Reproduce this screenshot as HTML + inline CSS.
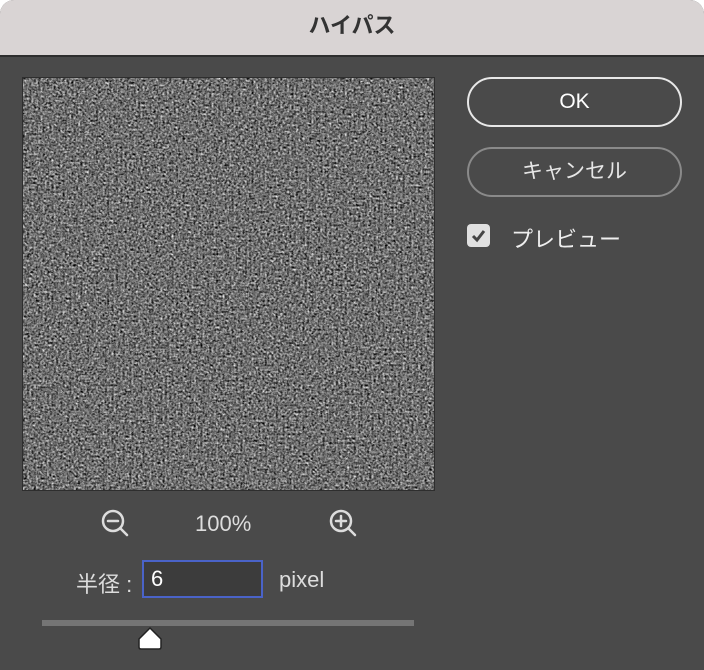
<!DOCTYPE html>
<html><head><meta charset="utf-8"><style>
html,body{margin:0;padding:0;width:704px;height:670px;background:#fff;overflow:hidden}
body{font-family:"Liberation Sans","Noto Sans CJK JP",sans-serif}
.win{position:absolute;left:0;top:0;width:704px;height:670px;border-radius:14px 14px 0 0;background:#4a4a4a;overflow:hidden}
.title{position:absolute;left:0;top:0;width:704px;height:55px;background:#d9d4d4;border-bottom:2px solid #2e2e2e;text-align:center;line-height:52px;font-size:22px;font-weight:bold;color:#333}
.prev{position:absolute;left:22px;top:77px;width:411px;height:412px;border:1px solid #2e2e2e;background:#707070;overflow:hidden}
.btn{position:absolute;left:467px;width:215px;height:50px;border:2px solid #cfcfcf;border-radius:26px;box-sizing:border-box;color:#eee;text-align:center;line-height:46px;font-size:21px}
.t{position:absolute;color:#ddd;font-size:22px}
</style></head><body>
<div class="win">
<div class="title">ハイパス</div>
<div class="prev"><svg width="411" height="412"><filter id="n" color-interpolation-filters="sRGB"><feTurbulence type="fractalNoise" baseFrequency="0.45" numOctaves="2" seed="3"/><feColorMatrix type="matrix" values="0.33 0.33 0.33 0 0 0.33 0.33 0.33 0 0 0.33 0.33 0.33 0 0 0 0 0 0 1"/><feComponentTransfer><feFuncR type="linear" slope="2" intercept="-0.56"/><feFuncG type="linear" slope="2" intercept="-0.56"/><feFuncB type="linear" slope="2" intercept="-0.56"/></feComponentTransfer></filter><rect width="411" height="412" filter="url(#n)"/></svg></div>
<div class="btn" style="top:77px;border-color:#e8e8e8;color:#fff">OK</div>
<div class="btn" style="top:147px;border-color:#8a8a8a;color:#e6e6e6">キャンセル</div>
<div style="position:absolute;left:467px;top:224px;width:23px;height:23px;background:#e0e0e0;border-radius:4px"><svg width="23" height="23"><path d="M6 12 L10 16 L17 7" stroke="#444" stroke-width="3" fill="none"/></svg></div>
<div class="t" style="left:511px;top:222px;color:#eee">プレビュー</div>
<svg style="position:absolute;left:100px;top:508px" width="32" height="32"><circle cx="13" cy="13" r="10" stroke="#ddd" stroke-width="2.5" fill="none"/><path d="M8 13h10M20 20l7 7" stroke="#ddd" stroke-width="2.5" stroke-linecap="round"/></svg>
<div class="t" style="left:195px;top:511px">100%</div>
<svg style="position:absolute;left:328px;top:508px" width="32" height="32"><circle cx="13" cy="13" r="10" stroke="#ddd" stroke-width="2.5" fill="none"/><path d="M8 13h10M13 8v10M20 20l7 7" stroke="#ddd" stroke-width="2.5" stroke-linecap="round"/></svg>
<div class="t" style="left:76px;top:567px">半径 :</div>
<div style="position:absolute;left:142px;top:560px;width:121px;height:38px;box-sizing:border-box;border:2px solid #4a63c8;background:#3c3c3c;color:#fff;font-size:22px;line-height:34px;padding-left:7px">6</div>
<div class="t" style="left:279px;top:567px">pixel</div>
<div style="position:absolute;left:42px;top:620px;width:372px;height:6px;background:#757575"></div>
<svg style="position:absolute;left:137px;top:625px" width="26" height="26"><path d="M2 14 L13 3 L24 14 V22 Q24 24 22 24 H4 Q2 24 2 22 Z" fill="#fff" stroke="#222" stroke-width="1.5"/></svg>
</div>
</body></html>
